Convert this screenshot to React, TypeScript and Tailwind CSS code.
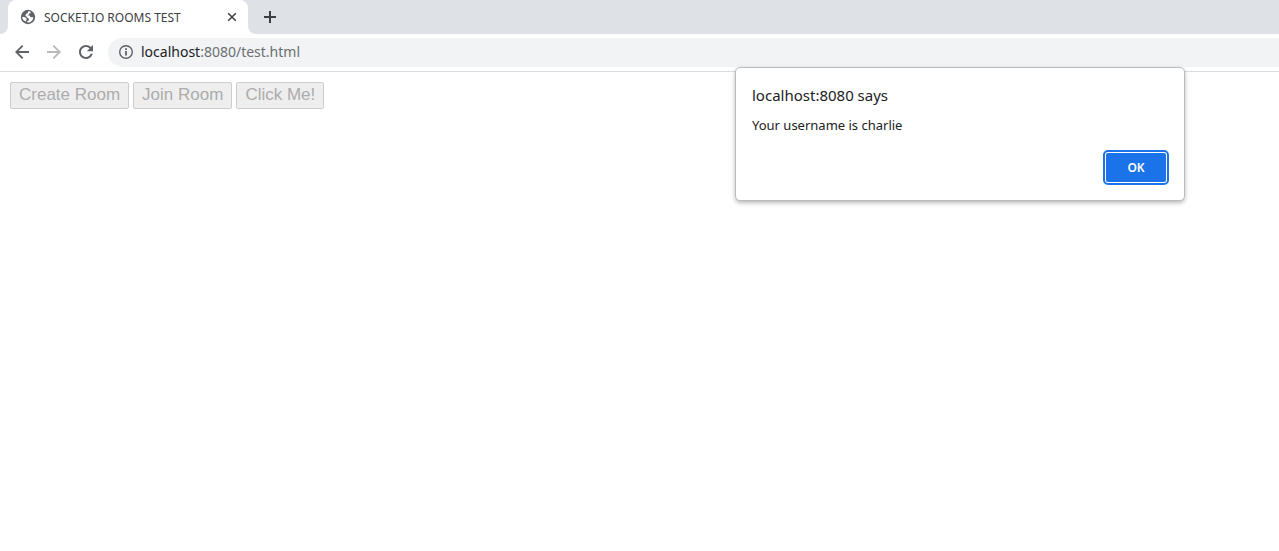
import React from "react";

function Glyph({ box, d, className }: { box: string; d: string; className: string }) {
  return (
    <svg viewBox={box} className={className} fill="currentColor" aria-hidden="true">
      <path d={d} />
    </svg>
  );
}

function TabStrip() {
  return (
    <div className="flex h-[34px] bg-white">
      <div className="w-2 shrink-0 rounded-br-lg bg-[#dee1e6]" />
      <div className="w-60 shrink-0 bg-[#dee1e6]">
        <div className="flex h-full items-center rounded-t-lg bg-white pr-2.5 pl-3">
          <svg viewBox="0 0 16 16" className="size-4 shrink-0" aria-hidden="true">
            <circle cx="8" cy="8" r="7.2" fill="#5f6368" />
            <path
              d="M9.2 2.3 10.6 2.8 10.5 4.2 9 4.6 8.8 5.8 7.4 6.4 9.6 6.6 10.6 8.2 13.5 8.3 12.6 11 10.2 13.2 7.2 13.5 7.2 12.2 9 11.2 8.8 9.8 7.6 8.8 6.6 7.8 5.4 6.6 6.2 4.8 7.8 4.2 8 2.6Z M2.3 7.8 5.2 8.2 6.6 9.6 6.4 11.2 5.8 12.6 3.8 11.6 2.5 9.8Z"
              fill="#fff"
            />
          </svg>
          <span className="ml-2 flex-1 truncate pt-0.5 text-[12px] leading-4 text-[#3c4043]">SOCKET.IO ROOMS TEST</span>
          <button type="button" aria-label="Close tab" className="flex size-3 items-center justify-center text-[#3c4043]">
            <svg viewBox="0 0 10 10" className="size-2.5" aria-hidden="true">
              <path d="M1.2 1.2 8.8 8.8M8.8 1.2 1.2 8.8" stroke="currentColor" strokeWidth="1.5" />
            </svg>
          </button>
        </div>
      </div>
      <div className="flex flex-1 items-center rounded-bl-lg bg-[#dee1e6] pl-4">
        <button type="button" aria-label="New tab" className="flex size-3 items-center justify-center text-[#3c4043]">
          <svg viewBox="0 0 12 12" className="size-3" aria-hidden="true">
            <path d="M6 0V12M0 6H12" stroke="currentColor" strokeWidth="2" />
          </svg>
        </button>
      </div>
    </div>
  );
}

function Toolbar() {
  return (
    <div className="flex h-[38px] items-start border-b border-[#dadce0] bg-white pt-1 pl-[15px]">
      <div className="flex h-7 w-[93px] shrink-0 items-center gap-[18px] text-[#5f6368]">
        <button type="button" aria-label="Back">
          <Glyph box="4 4 16 16" className="size-3.5" d="M20 10.8H8.1l5.5-5.3L12 4l-8 8 8 8 1.6-1.5L8.1 13.2H20v-2.4z" />
        </button>
        <button type="button" aria-label="Forward" disabled className="text-[#bababa]">
          <Glyph box="4 4 16 16" className="size-3.5" d="M12 4l-1.6 1.5 5.5 5.3H4v2.4h11.9l-5.5 5.3L12 20l8-8z" />
        </button>
        <button type="button" aria-label="Reload">
          <Glyph
            box="4 4 16 16"
            className="size-3.5"
            d="M17.65 6.35C16.2 4.9 14.21 4 12 4c-4.42 0-7.99 3.58-7.99 8s3.57 8 7.99 8c3.73 0 6.84-2.55 7.73-6h-2.4c-.82 2.1-2.9 3.7-5.33 3.7-3.1 0-5.7-2.6-5.7-5.7s2.6-5.7 5.7-5.7c1.6 0 3 .65 4 1.7L13 11h7V4l-2.35 2.35z"
          />
        </button>
      </div>
      <div className="flex h-[29px] flex-1 items-center rounded-l-full bg-[#f1f3f4] pb-px pl-[11px]">
        <svg viewBox="0 0 14 14" className="size-3.5 shrink-0 text-[#5f6368]" aria-hidden="true">
          <circle cx="7" cy="7" r="6.3" fill="none" stroke="currentColor" strokeWidth="1.4" />
          <path d="M6.1 6.1H7.9V10.6H6.1ZM6.1 3.3H7.9V5H6.1Z" fill="currentColor" />
        </svg>
        <span className="ml-2 text-[14px] leading-5 text-[#6b6f73]">
          <span className="text-[#202124]">localhost</span>:8080/test.html
        </span>
      </div>
    </div>
  );
}

function PageButton({ children }: { children: React.ReactNode }) {
  return (
    <button
      type="button"
      disabled
      className="h-[27px] rounded-[2px] border border-[#cdcdcd] bg-[#eeeeee] px-2 pb-0.5 font-['Liberation_Sans',Arial,sans-serif] text-[17px] leading-5 text-[#acacac]"
    >
      {children}
    </button>
  );
}

function AlertDialog() {
  return (
    <div
      role="alertdialog"
      aria-labelledby="alert-title"
      aria-describedby="alert-message"
      className="absolute top-[67px] right-[94px] flex w-[450px] flex-col rounded-[5px] border border-[#b9bbbd] bg-white px-4 py-[15px] text-[#202124] shadow-[0_2px_4px_rgba(0,0,0,0.28)]"
    >
      <h1 id="alert-title" className="text-[15px] leading-6">
        localhost:8080 says
      </h1>
      <p id="alert-message" className="mt-2 text-[13px] leading-5">
        Your username is charlie
      </p>
      <button
        type="button"
        className="mt-[15px] -mr-px h-[35px] w-[66px] self-end rounded-[5px] border-2 border-[#1a73e8] bg-white p-px text-[12px] leading-4 font-semibold text-white"
      >
        <span className="flex h-full items-center justify-center rounded-[2px] bg-[#1a73e8]">OK</span>
      </button>
    </div>
  );
}

export default function App() {
  return (
    <div className="relative min-h-screen bg-white font-['Noto_Sans',sans-serif]">
      <TabStrip />
      <Toolbar />
      <main className="flex gap-1 px-2.5 pt-2.5">
        <PageButton>Create Room</PageButton>
        <PageButton>Join Room</PageButton>
        <PageButton>Click Me!</PageButton>
      </main>
      <AlertDialog />
    </div>
  );
}
